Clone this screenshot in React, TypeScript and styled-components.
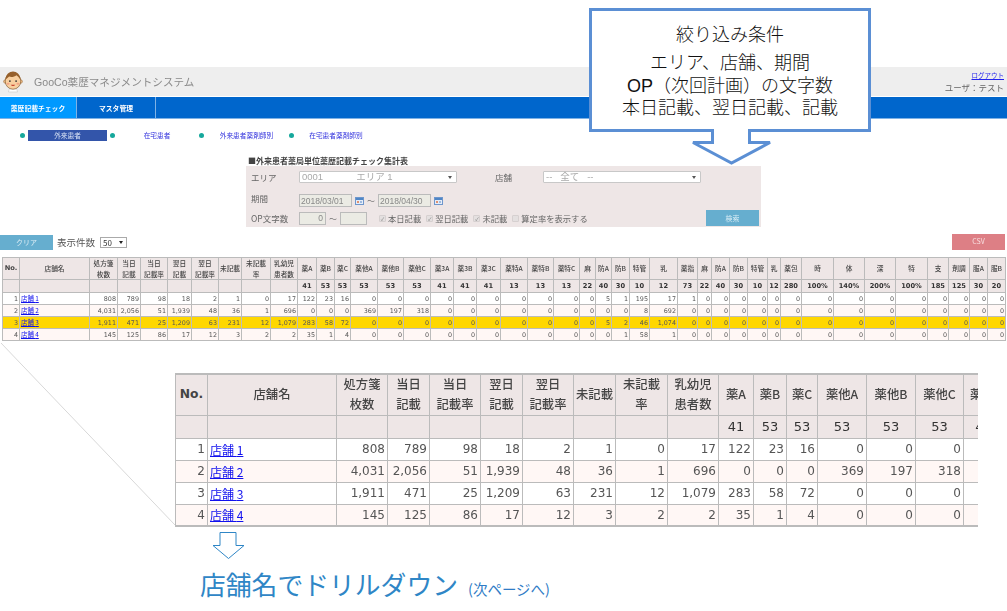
import React from 'react';
import styled, { createGlobalStyle } from 'styled-components';

const GlobalStyle = createGlobalStyle`
  html, body { margin: 0; padding: 0; background: #fff; }
  body { font-family: "DejaVu Sans", "Noto Sans CJK JP", sans-serif; }
`;

const SMALL_WIDTHS = [17, 70, 28, 23, 27, 24, 27, 23, 29, 27, 19, 18, 16, 27, 26, 27, 23, 23, 24, 27, 26, 26, 16, 16, 18, 20, 28, 20, 14, 18, 18, 20, 13, 21, 32, 31, 31, 32, 21, 21, 18, 18];
const BIG_WIDTHS = [32, 129, 51, 42, 51, 42, 51, 42, 52, 51, 35, 33, 31, 49, 49, 48, 40];

const HEADERS: Array<string[]> = [
  ['No.'], ['店舗名'], ['処方箋', '枚数'], ['当日', '記載'], ['当日', '記載率'], ['翌日', '記載'], ['翌日', '記載率'], ['未記載'], ['未記載', '率'], ['乳幼児', '患者数'],
  ['薬A'], ['薬B'], ['薬C'], ['薬他A'], ['薬他B'], ['薬他C'], ['薬3A'], ['薬3B'], ['薬3C'], ['薬特A'], ['薬特B'], ['薬特C'], ['麻'], ['防A'], ['防B'], ['特管'], ['乳'],
  ['薬指'], ['麻'], ['防A'], ['防B'], ['特管'], ['乳'], ['薬包'], ['時'], ['体'], ['深'], ['特'], ['支'], ['剤調'], ['服A'], ['服B'],
];

const LIMITS = ['', '', '', '', '', '', '', '', '', '', '41', '53', '53', '53', '53', '53', '41', '41', '41', '13', '13', '13', '22', '40', '30', '10', '12', '73', '22', '40', '30', '10', '12', '280', '100%', '140%', '200%', '100%', '185', '125', '30', '20'];

const zeros = (n: number) => Array(n).fill('0');

const ROWS: Array<string[]> = [
  ['808', '789', '98', '18', '2', '1', '0', '17', '122', '23', '16', ...zeros(10), '5', '1', '195', '17', '1', ...zeros(15)],
  ['4,031', '2,056', '51', '1,939', '48', '36', '1', '696', '0', '0', '0', '369', '197', '318', ...zeros(7), '0', '0', '8', '692', ...zeros(16)],
  ['1,911', '471', '25', '1,209', '63', '231', '12', '1,079', '283', '58', '72', ...zeros(10), '5', '2', '46', '1,074', ...zeros(16)],
  ['145', '125', '86', '17', '12', '3', '2', '2', '35', '1', '4', ...zeros(10), '0', '1', '58', '1', ...zeros(16)],
];

interface TableProps {
  widths: number[];
  big?: boolean;
  highlight?: number;
}

const DataTable: React.FC<TableProps> = ({ widths, big, highlight }) => {
  const count = widths.length;
  const total = widths.reduce((a, b) => a + b, 0);
  return (
    <Table $big={big} $w={total}>
      <colgroup>
        {widths.map((w, i) => <Col key={i} $w={w} />)}
      </colgroup>
      <thead>
        <HeadRow $big={big}>
          {HEADERS.slice(0, count).map((lines, i) => (
            <HeadCell key={i} $big={big} $strong={i === 0}>
              {lines.map((line, j) => <HeadLine key={j} $big={big}>{line}</HeadLine>)}
            </HeadCell>
          ))}
        </HeadRow>
        <LimitRow $big={big}>
          {LIMITS.slice(0, count).map((limit, i) => <LimitCell key={i} $big={big}>{limit}</LimitCell>)}
        </LimitRow>
      </thead>
      <tbody>
        {ROWS.map((row, r) => (
          <BodyRow key={r} $big={big} $even={r % 2 === 1} $active={highlight === r}>
            <Num>{r + 1}</Num>
            <ShopCell><ShopLink href="#">店舗 {r + 1}</ShopLink></ShopCell>
            {row.slice(0, count - 2).map((v, i) => <Num key={i}>{v}</Num>)}
          </BodyRow>
        ))}
      </tbody>
    </Table>
  );
};

const Logo = () => (
  <LogoSvg viewBox="0 0 22 24" aria-hidden="true">
    <path d="M7 20h8l1 3.5H6z" fill="#fff" stroke="#bbb" strokeWidth=".5" />
    <circle cx="2.6" cy="12" r="2" fill="#f5c48e" stroke="#8a5a2b" strokeWidth=".5" />
    <circle cx="19.4" cy="12" r="2" fill="#f5c48e" stroke="#8a5a2b" strokeWidth=".5" />
    <ellipse cx="11" cy="11.5" rx="8.6" ry="9" fill="#f8cf9f" stroke="#7a4d22" strokeWidth=".7" />
    <path d="M2.8 10C3 4 7 1 11 1s8 3 8.2 9c-2-3-3-4-4.500-5-2 2-6 2.500-8 1.500C5 8 3.800 9 2.800 10z" fill="#96602c" />
    <circle cx="7.600" cy="11.500" r="1" fill="#333" />
    <circle cx="14.400" cy="11.500" r="1" fill="#333" />
    <ellipse cx="5.600" cy="14.500" rx="1.600" ry="1" fill="#f3a183" />
    <ellipse cx="16.400" cy="14.500" rx="1.600" ry="1" fill="#f3a183" />
    <path d="M8.500 15.500c1.200 2 3.800 2 5 0z" fill="#c8452f" />
  </LogoSvg>
);

const CalendarIcon = () => (
  <CalendarSvg viewBox="0 0 9 8" aria-hidden="true">
    <rect x=".5" y=".5" width="8" height="7" fill="#e6edf7" stroke="#6f97cc" />
    <rect x="1" y="1" width="7" height="2" fill="#4f86c6" />
    <rect x="2" y="4" width="2" height="2" fill="#e09070" />
    <rect x="5" y="4" width="2" height="2" fill="#9db9e0" />
  </CalendarSvg>
);

export default function App() {
  return (
    <Page>
      <GlobalStyle />
      <Screen>
        <TopBar>
          <Brand>
            <Logo />
            <BrandName>GooCo薬歴マネジメントシステム</BrandName>
          </Brand>
          <UserBox>
            <LogoutLink href="#">ログアウト</LogoutLink>
            <UserName>ユーザ：テスト</UserName>
          </UserBox>
        </TopBar>
        <NavBar>
          <NavTab $active>薬歴記載チェック</NavTab>
          <NavTab>マスタ管理</NavTab>
        </NavBar>
        <SubNav>
          <SubItem><Dot /><SubLabel $active>外来患者</SubLabel></SubItem>
          <SubItem><Dot /><SubLabel>在宅患者</SubLabel></SubItem>
          <SubItem><Dot /><SubLabel>外来患者薬剤師別</SubLabel></SubItem>
          <SubItem><Dot /><SubLabel>在宅患者薬剤師別</SubLabel></SubItem>
        </SubNav>
        <FormTitle>■外来患者薬局単位薬歴記載チェック集計表</FormTitle>
        <FormPanel>
          <FormRow $h={14} $top={0}>
            <FieldLabel>エリア</FieldLabel>
            <Picker>0001<PickerGap />エリア 1</Picker>
            <ShopLabel>店舗</ShopLabel>
            <Picker>{'--   全て   --'}</Picker>
          </FormRow>
          <FormRow $h={13} $top={10}>
            <FieldLabel $raised>期間</FieldLabel>
            <DateBox readOnly value="2018/03/01" />
            <CalendarIcon />
            <Tilde>～</Tilde>
            <DateBox readOnly value="2018/04/30" />
            <CalendarIcon />
          </FormRow>
          <FormRow $h={16} $top={3}>
            <FieldLabel>OP文字数</FieldLabel>
            <NumBox readOnly value="0" />
            <Tilde>～</Tilde>
            <NumBox readOnly value="" />
            <Checks>
              <CheckItem><CheckMark>✓</CheckMark>本日記載</CheckItem>
              <CheckItem><CheckMark>✓</CheckMark>翌日記載</CheckItem>
              <CheckItem><CheckMark>✓</CheckMark>未記載</CheckItem>
              <CheckItem><CheckMark />算定率を表示する</CheckItem>
            </Checks>
            <SearchButton>検索</SearchButton>
          </FormRow>
        </FormPanel>
        <Toolbar>
          <ClearButton>クリア</ClearButton>
          <CountLabel>表示件数</CountLabel>
          <CountPicker>50</CountPicker>
          <CsvButton>CSV</CsvButton>
        </Toolbar>
        <SummaryWrap>
          <DataTable widths={SMALL_WIDTHS} highlight={2} />
        </SummaryWrap>
      </Screen>

      <Enlarged>
        <DataTable widths={BIG_WIDTHS} big />
      </Enlarged>

      <DrillBlock>
        <DrillArrow viewBox="0 0 33 27" aria-hidden="true">
          <path d="M8 .5h16v13h8L16.500 26.500 1 13.500h7z" fill="#fff" stroke="#2f86c6" />
        </DrillArrow>
        <DrillText>店舗名でドリルダウン<DrillNote>(次ページへ)</DrillNote></DrillText>
      </DrillBlock>

      <LeaderLine viewBox="0 0 180 190" aria-hidden="true">
        <path d="M1 2L175 184" stroke="#d8d8d8" fill="none" />
      </LeaderLine>

      <Callout>
        <CalloutTitle>絞り込み条件</CalloutTitle>
        <CalloutBody>
          エリア、店舗、期間<br />
          OP（次回計画）の文字数<br />
          本日記載、翌日記載、記載
        </CalloutBody>
        <CalloutTail viewBox="0 0 84 37" aria-hidden="true">
          <path d="M22.500 0V13.500H3L41.500 34 80 13.500H59.500V0" fill="#fff" stroke="#5b8fd4" strokeWidth="3" />
        </CalloutTail>
      </Callout>
    </Page>
  );
}

const Page = styled.div`
  position: relative;
  width: 1007px;
  height: 611px;
  overflow: hidden;
  padding-top: 67px;
  box-sizing: border-box;
  background: #fff;
`;

const Screen = styled.div`
  filter: blur(0.35px);
`;

const TopBar = styled.header`
  height: 29px;
  background: #eeeeee;
  display: flex;
  justify-content: space-between;
  align-items: center;
  padding: 0 3px;
`;

const Brand = styled.div`
  display: flex;
  align-items: center;
  gap: 11px;
`;

const LogoSvg = styled.svg`
  width: 20px;
  height: 23px;
  display: block;
`;

const BrandName = styled.span`
  font-family: "Liberation Sans", "Noto Sans CJK JP", sans-serif;
  font-size: 10.600px;
  color: #8a8a8a;
  white-space: nowrap;
`;

const UserBox = styled.div`
  display: flex;
  flex-direction: column;
  align-items: flex-end;
  gap: 2px;
  font-family: "Noto Sans CJK JP", sans-serif;
`;

const LogoutLink = styled.a`
  font-size: 6.500px;
  line-height: 9px;
  color: #2222ee;
`;

const UserName = styled.span`
  font-size: 8.500px;
  line-height: 11px;
  color: #666;
`;

const NavBar = styled.nav`
  height: 21px;
  margin-top: 1px;
  background: #0066cc;
  border-bottom: 1px solid #7fb2e5;
  display: flex;
  box-sizing: content-box;
`;

const NavTab = styled.div<{ $active?: boolean }>`
  width: ${p => (p.$active ? '76px' : '78px')};
  background: ${p => (p.$active ? '#0099ff' : '#0066cc')};
  border-right: 1px solid #7fb2e5;
  color: #fff;
  font-family: "Noto Sans CJK JP", sans-serif;
  font-size: 6.800px;
  font-weight: 700;
  display: flex;
  align-items: center;
  justify-content: center;
`;

const SubNav = styled.div`
  display: flex;
  padding: 10px 0 0 20px;
  height: 12px;
`;

const SubItem = styled.div`
  display: flex;
  align-items: center;
  width: 89.500px;
  gap: 2px;
`;

const Dot = styled.span`
  width: 5px;
  height: 5px;
  border-radius: 50%;
  background: #16a89c;
  flex: none;
`;

const SubLabel = styled.span<{ $active?: boolean }>`
  width: 79px;
  height: 11px;
  line-height: 11px;
  margin-left: 1px;
  text-align: center;
  font-family: "Noto Sans CJK JP", sans-serif;
  font-size: 6.700px;
  color: ${p => (p.$active ? '#d8e2f5' : '#3333dd')};
  background: ${p => (p.$active ? '#3355aa' : 'transparent')};
  white-space: nowrap;
`;

const FormTitle = styled.div`
  margin: 14px 0 0 248px;
  height: 11px;
  line-height: 11px;
  font-family: "Noto Sans CJK JP", sans-serif;
  font-size: 8px;
  font-weight: 700;
  color: #444;
  white-space: nowrap;
`;

const FormPanel = styled.div`
  margin-left: 246px;
  width: 515px;
  height: 61px;
  background: #eee6e6;
  box-sizing: border-box;
  padding: 4px 2px 1px 5px;
  font-family: "Noto Sans CJK JP", sans-serif;
  font-size: 8.500px;
  color: #666;
`;

const FormRow = styled.div<{ $h: number; $top: number }>`
  height: ${p => p.$h}px;
  margin-top: ${p => p.$top}px;
  display: flex;
  align-items: center;
`;

const FieldLabel = styled.span<{ $raised?: boolean }>`
  width: 48px;
  flex: none;
  white-space: nowrap;
  margin-bottom: ${p => (p.$raised ? '5px' : '0')};
`;

const ShopLabel = styled.span`
  width: 48px;
  margin-left: 38px;
  flex: none;
`;

const Picker = styled.div`
  position: relative;
  width: 158px;
  height: 12px;
  line-height: 12px;
  box-sizing: border-box;
  padding-left: 2px;
  background: #fff;
  border: 1px solid #c8c8c8;
  border-radius: 1px;
  color: #aaa;
  font-family: "Liberation Sans", "Noto Sans CJK JP", sans-serif;
  font-size: 9.500px;
  white-space: pre;
  display: flex;
  align-items: center;
  &::after {
    content: '';
    position: absolute;
    right: 4px;
    top: 4px;
    border: 2px solid transparent;
    border-top: 3px solid #555;
    border-bottom: 0;
  }
`;

const PickerGap = styled.span`
  width: 33px;
`;

const DateBox = styled.input`
  width: 53px;
  height: 13px;
  box-sizing: border-box;
  padding: 0 1px;
  border: 1px solid #bbb;
  background: #ebebe4;
  color: #888;
  font: 8.500px "Liberation Sans", sans-serif;
  outline: none;
`;

const NumBox = styled.input`
  width: 27px;
  height: 13px;
  box-sizing: border-box;
  padding: 0 2px;
  text-align: right;
  border: 1px solid #bbb;
  background: #ebebe4;
  color: #888;
  font: 8.500px "Liberation Sans", sans-serif;
  outline: none;
`;

const CalendarSvg = styled.svg`
  width: 9px;
  height: 8px;
  margin-left: 3px;
  flex: none;
`;

const Tilde = styled.span`
  width: 14px;
  text-align: center;
  font-size: 8px;
  color: #777;
  flex: none;
`;

const Checks = styled.div`
  display: flex;
  margin-left: 12px;
  gap: 5px;
  white-space: nowrap;
  font-size: 8.300px;
`;

const CheckItem = styled.span`
  display: flex;
  align-items: center;
  gap: 2px;
`;

const CheckMark = styled.span`
  width: 5px;
  height: 5px;
  line-height: 5px;
  text-align: center;
  font-size: 5px;
  color: #777;
  background: #e4e0e0;
  border: 1px solid #d6d0d0;
  border-radius: 1px;
`;

const SearchButton = styled.div`
  width: 53px;
  height: 16px;
  line-height: 16px;
  margin-left: auto;
  background: #66aecf;
  color: #d8ecf5;
  font-size: 7px;
  text-align: center;
`;

const Toolbar = styled.div`
  display: flex;
  align-items: center;
  height: 16px;
  margin-top: 7px;
  padding-right: 2px;
  font-family: "Noto Sans CJK JP", sans-serif;
`;

const ClearButton = styled.div`
  width: 53px;
  height: 15px;
  line-height: 15px;
  background: #66aecf;
  color: #dcedf5;
  font-size: 7px;
  text-align: center;
`;

const CountLabel = styled.span`
  margin-left: 4px;
  font-size: 9.500px;
  color: #555;
`;

const CountPicker = styled.div`
  position: relative;
  width: 27px;
  height: 11px;
  line-height: 10px;
  margin-left: 5px;
  box-sizing: border-box;
  padding-left: 2px;
  border: 1px solid #aaa;
  font-size: 8px;
  color: #333;
  &::after {
    content: '';
    position: absolute;
    right: 3px;
    top: 3px;
    border: 2px solid transparent;
    border-top: 3px solid #222;
    border-bottom: 0;
  }
`;

const CsvButton = styled.div`
  width: 53px;
  height: 16px;
  line-height: 15px;
  margin-left: auto;
  background: #dd7f85;
  color: #f8dfe0;
  font-size: 7px;
  text-align: center;
`;

const SummaryWrap = styled.div`
  margin: 7px 0 0 2px;
`;

const Enlarged = styled.div`
  margin: 32px 0 0 175px;
  width: 803px;
  overflow: hidden;
  filter: blur(0.2px);
`;

const Table = styled.table<{ $big?: boolean; $w: number }>`
  table-layout: fixed;
  border-collapse: collapse;
  width: ${p => p.$w}px;
  font-family: "DejaVu Sans", "Noto Sans CJK JP", sans-serif;
  font-size: ${p => (p.$big ? '12px' : '6.400px')};
  color: #555;
  border-top: ${p => (p.$big ? '2px' : '1px')} solid #bbb;
  border-bottom: ${p => (p.$big ? '2px' : '1px')} solid #bbb;
  td, th {
    border: 1px solid #bbb;
    padding: 0 ${p => (p.$big ? '2px' : '1px')};
    overflow: hidden;
    white-space: nowrap;
  }
`;

const Col = styled.col<{ $w: number }>`
  width: ${p => p.$w}px;
`;

const HeadRow = styled.tr<{ $big?: boolean }>`
  height: ${p => (p.$big ? '41px' : '22px')};
  background: #eee6e6;
`;

const HeadCell = styled.th<{ $big?: boolean; $strong?: boolean }>`
  font-family: ${p => (p.$strong ? '"DejaVu Sans", sans-serif' : '"Noto Sans CJK JP", sans-serif')};
  font-size: ${p => (p.$big ? '12.300px' : '6.700px')};
  font-weight: ${p => (p.$strong ? 700 : 500)};
  color: #444;
  text-align: center;
`;

const HeadLine = styled.div<{ $big?: boolean }>`
  line-height: ${p => (p.$big ? '19.500px' : '10.500px')};
`;

const LimitRow = styled.tr<{ $big?: boolean }>`
  height: ${p => (p.$big ? '23px' : '13px')};
  background: #eee6e6;
`;

const LimitCell = styled.td<{ $big?: boolean }>`
  text-align: center;
  font-weight: ${p => (p.$big ? 400 : 700)};
  font-size: ${p => (p.$big ? '13px' : '6.700px')};
  color: #333;
`;

const BodyRow = styled.tr<{ $big?: boolean; $even: boolean; $active: boolean }>`
  height: ${p => (p.$big ? '22px' : '12px')};
  background: ${p => (p.$active ? '#ffd700' : p.$even ? '#fff7f5' : '#fff')};
`;

const Num = styled.td`
  text-align: right;
`;

const ShopCell = styled.td`
  text-align: left;
`;

const ShopLink = styled.a`
  font-family: "Noto Sans CJK JP", sans-serif;
  color: #1111ee;
  text-decoration: underline;
`;

const DrillBlock = styled.div`
  margin: 5px 0 0 200px;
`;

const DrillArrow = styled.svg`
  display: block;
  width: 33px;
  height: 27px;
  margin-left: 12px;
`;

const DrillText = styled.div`
  margin-top: 7px;
  height: 36px;
  line-height: 36px;
  font-family: "Noto Sans CJK JP", sans-serif;
  font-size: 25.800px;
  color: #2f86c6;
  white-space: nowrap;
`;

const DrillNote = styled.span`
  margin-left: 10px;
  font-size: 14.500px;
  color: #2f7cc6;
`;

const LeaderLine = styled.svg`
  position: absolute;
  left: 0;
  top: 341px;
  width: 180px;
  height: 190px;
`;

const Callout = styled.div`
  position: absolute;
  left: 589px;
  top: 8px;
  width: 282px;
  height: 124px;
  box-sizing: border-box;
  border: 3px solid #5b8fd4;
  background: #fff;
  text-align: center;
  font-family: "Liberation Sans", "Noto Sans CJK JP", sans-serif;
  font-size: 18px;
  font-weight: 300;
  color: #111;
  padding-top: 13px;
`;

const CalloutTitle = styled.div`
  line-height: 22px;
`;

const CalloutBody = styled.div`
  margin-top: 6px;
  line-height: 22.500px;
  white-space: nowrap;
`;

const CalloutTail = styled.svg`
  position: absolute;
  left: 98px;
  top: 118px;
  width: 84px;
  height: 37px;
`;
